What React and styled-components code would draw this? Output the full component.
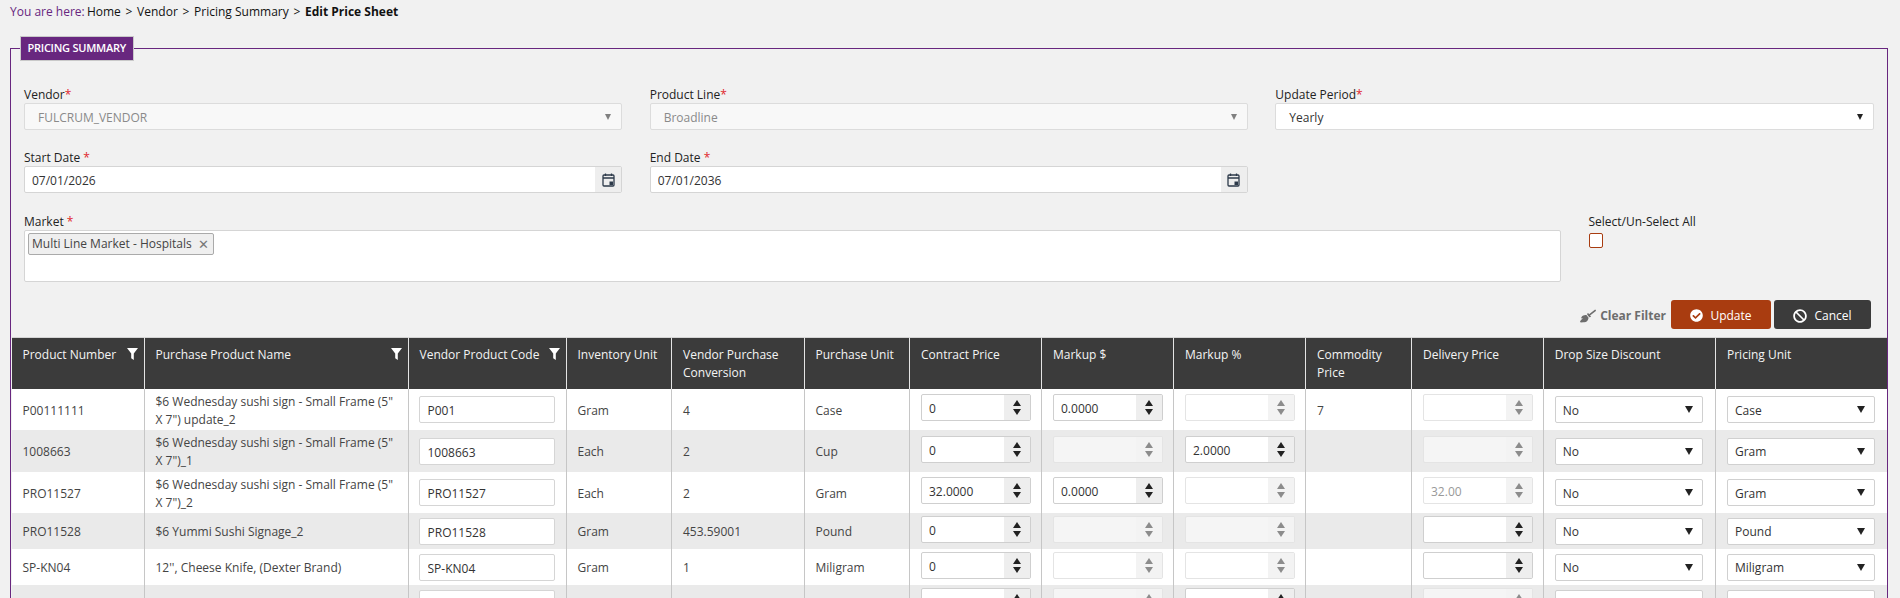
import React from 'react';
import styled, { createGlobalStyle } from 'styled-components';
import { FaBroom, FaCheckCircle, FaBan } from 'react-icons/fa';

const GlobalStyle = createGlobalStyle`
  html, body {
    margin: 0;
    height: 598px;
    overflow: hidden;
    background: #f1f1f1;
  }
  body {
    font-family: "Open Sans", "Noto Sans", sans-serif;
    font-size: 12px;
    line-height: 18px;
    color: #222;
  }
  * { box-sizing: border-box; }
`;

const Crumbs = styled.div`
  height: 36px;
  padding: 3px 0 0 10px;
  display: flex;
  gap: 4.7px;
  color: #111;
`;
const Here = styled.span`
  margin-right: -2.5px;
  color: #68277f;
`;
const Current = styled.b`font-weight: 700;`;

const Panel = styled.fieldset`
  margin: 0 12px 0 9.5px;
  padding: 0 1px;
  min-width: 0;
  border: 1px solid #68277f;
`;
const Title = styled.legend`
  margin-left: 8px;
  padding: 0 7px;
  height: 25px;
  line-height: 22px;
  background: #68277f;
  border: 1px solid #c9c9c9;
  color: #fff;
  font-size: 11px;
  font-weight: 600;
  letter-spacing: -0.25px;
  white-space: nowrap;
`;

const Form = styled.div`
  display: grid;
  grid-template-columns: repeat(3, 1fr);
  gap: 18px 27.5px;
  padding: 24px 12.5px 0;
`;
const Label = styled.div`
  height: 18px;
  line-height: 20px;
  color: #222;
`;
const Req = styled.span`color: #e0262e;`;
const SelectBox = styled.div`
  height: 27px;
  display: flex;
  align-items: center;
  justify-content: space-between;
  padding: 2px 10px 0 13px;
  background: ${p => (p.$off ? '#f8f8f8' : '#fff')};
  color: ${p => (p.$off ? '#8a8a8a' : '#333')};
  border: 1px solid #dcdcdc;
  border-radius: 2px;
`;
const Caret = styled.i`
  width: 0;
  height: 0;
  margin-top: -2px;
  border-left: 3.5px solid transparent;
  border-right: 3.5px solid transparent;
  border-top: 6px solid ${p => (p.$off ? '#808080' : '#222')};
`;
const DateBox = styled.div`
  height: 27px;
  display: flex;
  background: #fff;
  border: 1px solid #d5d5d5;
  border-radius: 2px;
`;
const DateInput = styled.input`
  flex: 1;
  min-width: 0;
  border: 0;
  outline: 0;
  padding: 2px 7px 0;
  font: inherit;
  color: #333;
  background: transparent;
`;
const DateBtn = styled.span`
  width: 26px;
  display: flex;
  align-items: center;
  justify-content: center;
  background: #eeeeee;
`;

const MarketRow = styled.div`
  display: grid;
  grid-template-columns: 1fr 284px;
  column-gap: 27.5px;
  padding: 19px 13.5px 0 12.5px;
`;
const ChipArea = styled.div`
  height: 52px;
  padding: 2px 3px;
  background: #fff;
  border: 1px solid #d5d5d5;
  border-radius: 2px;
`;
const Chip = styled.span`
  display: inline-flex;
  align-items: center;
  gap: 6px;
  height: 22px;
  padding: 0 4px 0 3px;
  background: #efefef;
  border: 1px solid #aaa;
  border-radius: 2px;
  color: #444;
`;
const ChipX = styled.span`
  color: #777;
  font-size: 13px;
`;
const Check = styled.div`
  width: 14.5px;
  height: 15px;
  margin-top: 3px;
  background: #fff;
  border: 1px solid #a83c10;
  border-radius: 2px;
`;

const Actions = styled.div`
  display: flex;
  justify-content: flex-end;
  align-items: center;
  padding: 18px 15px 8px 0;
`;
const ClearFilter = styled.span`
  display: flex;
  align-items: center;
  gap: 4px;
  margin-right: 5px;
  padding-top: 2px;
  color: #6d6d6d;
  font-weight: 700;
`;
const Button = styled.span`
  width: ${p => p.$w}px;
  height: 29px;
  margin-left: ${p => p.$gap || 0}px;
  padding-top: 2px;
  display: flex;
  align-items: center;
  justify-content: center;
  gap: 7px;
  background: ${p => p.$bg};
  color: #fff;
  border-radius: 3px;
`;

const Table = styled.table`
  width: 1875px;
  table-layout: fixed;
  border-collapse: separate;
  border-spacing: 0;
`;
const Th = styled.th`
  height: 52px;
  padding: 8px 6px 0 11px;
  background: #3b3b3b;
  color: #f4f4f4;
  font-weight: 400;
  text-align: left;
  vertical-align: top;
  border-top: 1px solid #d4d4d4;
  border-right: 1px solid #e4e4e4;
  &:last-child { border-right: 0; }
`;
const ThInner = styled.div`
  display: flex;
  justify-content: space-between;
  align-items: flex-start;
`;
const Row = styled.tr`
  height: ${p => p.$h}px;
  background: ${p => (p.$alt ? '#eaeaea' : '#fff')};
`;
const Td = styled.td`
  padding: 2px 10px 0 11px;
  vertical-align: middle;
  color: #444;
  border-right: 1px solid #c6c6c6;
  &:last-child { border-right: 0; }
`;
const TextField = styled.input`
  display: block;
  width: 136px;
  height: 27px;
  margin: 0 0 2px -1px;
  padding: 2px 8px 0;
  font: inherit;
  color: #333;
  background: #fff;
  border: 1px solid #d5d5d5;
  border-radius: 2px;
  outline: 0;
`;
const Spin = styled.div`
  width: 110px;
  height: 27px;
  margin-bottom: 6px;
  display: flex;
  background: ${p => (p.$off ? 'rgba(255, 255, 255, .5)' : '#fff')};
  border: 1px solid ${p => (p.$off ? '#e4e4e4' : '#cfcfcf')};
  border-radius: 2px;
`;
const SpinValue = styled.span`
  flex: 1;
  padding-left: 7px;
  line-height: 27px;
  color: ${p => (p.$off ? '#999' : '#333')};
`;
const SpinBtns = styled.span`
  width: 26px;
  display: flex;
  flex-direction: column;
  align-items: center;
  justify-content: center;
  gap: 3px;
  background: ${p => (p.$off ? '#f3f3f3' : '#eeeeee')};
`;
const Tri = styled.i`
  width: 0;
  height: 0;
  border-left: 4.5px solid transparent;
  border-right: 4.5px solid transparent;
  ${p => (p.$down ? 'border-top' : 'border-bottom')}: 6px solid ${p => (p.$off ? '#8c8c8c' : '#222')};
`;
const CellSelect = styled(SelectBox)`
  width: 148.5px;
  margin-bottom: 2px;
  border-color: #d0d0d0;
  padding: 2px 9px 0 7px;
`;
const BigCaret = styled(Caret)`
  border-left-width: 4px;
  border-right-width: 4px;
  border-top-width: 7px;
`;

const Calendar = () => (
  <svg width="13" height="14" viewBox="0 0 13 14" fill="none" stroke="#2d3a4a" strokeWidth="1.3">
    <rect x="1" y="2" width="11" height="11" rx="1" />
    <path d="M1 5h11M3.5 0.5v2.5M9.5 0.5v2.5" />
    <rect x="7.5" y="8.5" width="3.5" height="3.5" fill="#2d3a4a" stroke="none" />
  </svg>
);

const Funnel = () => (
  <svg width="11" height="12" viewBox="0 0 11 12" style={{ flex: 'none', marginTop: 2 }}>
    <path d="M0 0h11L6.8 5.4V12L4.2 10.2V5.4z" fill="#fff" />
  </svg>
);

const SpinInput = ({ value = '', off }) => (
  <Spin $off={off}>
    <SpinValue $off={off}>{value}</SpinValue>
    <SpinBtns $off={off}>
      <Tri $off={off} />
      <Tri $off={off} $down />
    </SpinBtns>
  </Spin>
);

const Dropdown = ({ value }) => (
  <CellSelect>
    {value}
    <BigCaret />
  </CellSelect>
);

const columns = [
  { w: 133, label: 'Product Number', filter: true },
  { w: 264, label: 'Purchase Product Name', filter: true },
  { w: 158, label: 'Vendor Product Code', filter: true },
  { w: 105.5, label: 'Inventory Unit' },
  { w: 132.5, label: 'Vendor Purchase Conversion' },
  { w: 105.5, label: 'Purchase Unit' },
  { w: 132, label: 'Contract Price' },
  { w: 132, label: 'Markup $' },
  { w: 132, label: 'Markup %' },
  { w: 106, label: 'Commodity Price' },
  { w: 131.7, label: 'Delivery Price' },
  { w: 172.3, label: 'Drop Size Discount' },
  { w: 170.5, label: 'Pricing Unit' },
];

const sushi = '$6 Wednesday sushi sign - Small Frame (5" X 7")';

const rows = [
  { h: 41, num: 'P00111111', name: `${sushi} update_2`, code: 'P001', inv: 'Gram', conv: '4', unit: 'Case',
    contract: { value: '0' }, markup: { value: '0.0000' }, pct: { off: true }, comm: '7', delivery: { off: true }, pricing: 'Case' },
  { h: 42, num: '1008663', name: `${sushi}_1`, code: '1008663', inv: 'Each', conv: '2', unit: 'Cup',
    contract: { value: '0' }, markup: { off: true }, pct: { value: '2.0000' }, delivery: { off: true }, pricing: 'Gram' },
  { h: 41, num: 'PRO11527', name: `${sushi}_2`, code: 'PRO11527', inv: 'Each', conv: '2', unit: 'Gram',
    contract: { value: '32.0000' }, markup: { value: '0.0000' }, pct: { off: true }, delivery: { off: true, value: '32.00' }, pricing: 'Gram' },
  { h: 36, num: 'PRO11528', name: '$6 Yummi Sushi Signage_2', code: 'PRO11528', inv: 'Gram', conv: '453.59001', unit: 'Pound',
    contract: { value: '0' }, markup: { off: true }, pct: { off: true }, delivery: {}, pricing: 'Pound' },
  { h: 36, num: 'SP-KN04', name: "12'', Cheese Knife, (Dexter Brand)", code: 'SP-KN04', inv: 'Gram', conv: '1', unit: 'Miligram',
    contract: { value: '0' }, markup: { off: true }, pct: { off: true }, delivery: {}, pricing: 'Miligram' },
  { h: 36, contract: {}, markup: { off: true }, pct: {}, delivery: { off: true } },
];

const App = () => {
  return (
    <>
      <GlobalStyle />
      <Crumbs>
        <Here>You are here:</Here>
        <span>Home</span>
        <span>&gt;</span>
        <span>Vendor</span>
        <span>&gt;</span>
        <span>Pricing Summary</span>
        <span>&gt;</span>
        <Current>Edit Price Sheet</Current>
      </Crumbs>
      <Panel>
        <Title>PRICING SUMMARY</Title>
        <Form>
          <div>
            <Label>Vendor<Req>*</Req></Label>
            <SelectBox $off>FULCRUM_VENDOR<Caret $off /></SelectBox>
          </div>
          <div>
            <Label>Product Line<Req>*</Req></Label>
            <SelectBox $off>Broadline<Caret $off /></SelectBox>
          </div>
          <div>
            <Label>Update Period<Req>*</Req></Label>
            <SelectBox>Yearly<Caret /></SelectBox>
          </div>
          <div>
            <Label>Start Date <Req>*</Req></Label>
            <DateBox>
              <DateInput readOnly value="07/01/2026" />
              <DateBtn><Calendar /></DateBtn>
            </DateBox>
          </div>
          <div>
            <Label>End Date <Req>*</Req></Label>
            <DateBox>
              <DateInput readOnly value="07/01/2036" />
              <DateBtn><Calendar /></DateBtn>
            </DateBox>
          </div>
        </Form>
        <MarketRow>
          <div>
            <Label>Market <Req>*</Req></Label>
            <ChipArea>
              <Chip>Multi Line Market - Hospitals <ChipX>✕</ChipX></Chip>
            </ChipArea>
          </div>
          <div>
            <Label>Select/Un-Select All</Label>
            <Check />
          </div>
        </MarketRow>
        <Actions>
          <ClearFilter><FaBroom size={16} />Clear Filter</ClearFilter>
          <Button $w={100} $bg="#a93c10"><FaCheckCircle size={13} />Update</Button>
          <Button $w={97} $gap={3} $bg="#3b3b3b"><FaBan size={14} />Cancel</Button>
        </Actions>
        <Table>
          <colgroup>
            {columns.map(c => <col key={c.label} style={{ width: c.w }} />)}
          </colgroup>
          <thead>
            <tr>
              {columns.map(c => (
                <Th key={c.label}>
                  <ThInner>
                    <span>{c.label}</span>
                    {c.filter && <Funnel />}
                  </ThInner>
                </Th>
              ))}
            </tr>
          </thead>
          <tbody>
            {rows.map((r, i) => (
              <Row key={i} $h={r.h} $alt={i % 2 === 1}>
                <Td>{r.num}</Td>
                <Td>{r.name}</Td>
                <Td><TextField readOnly value={r.code || ''} /></Td>
                <Td>{r.inv}</Td>
                <Td>{r.conv}</Td>
                <Td>{r.unit}</Td>
                <Td><SpinInput {...r.contract} /></Td>
                <Td><SpinInput {...r.markup} /></Td>
                <Td><SpinInput {...r.pct} /></Td>
                <Td>{r.comm}</Td>
                <Td><SpinInput {...r.delivery} /></Td>
                <Td><Dropdown value={r.num ? 'No' : ''} /></Td>
                <Td><Dropdown value={r.pricing} /></Td>
              </Row>
            ))}
          </tbody>
        </Table>
      </Panel>
    </>
  );
};

export default App;
